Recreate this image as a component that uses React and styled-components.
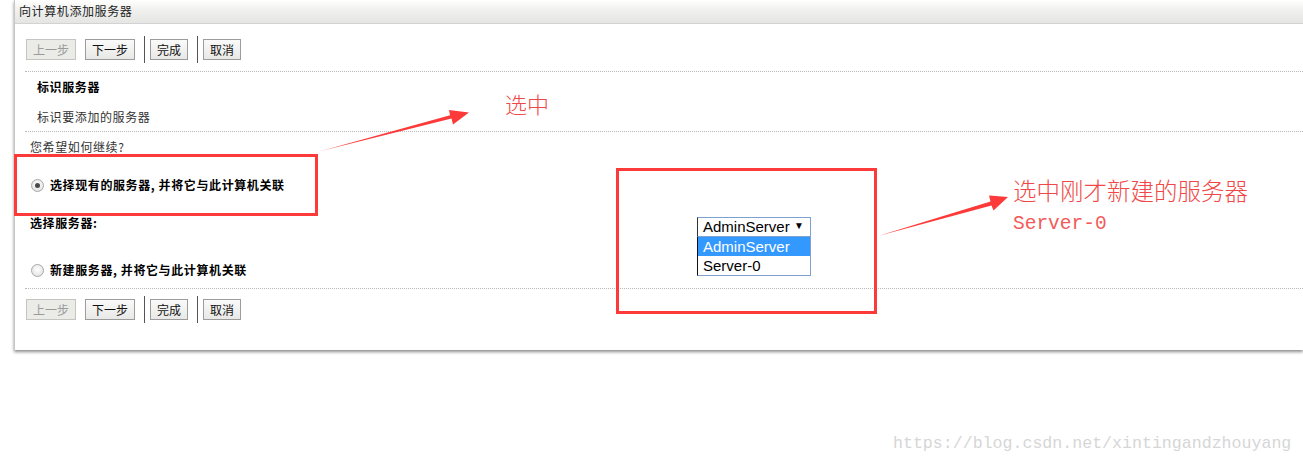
import React from 'react';
import styled, { createGlobalStyle } from 'styled-components';

const GlobalStyle = createGlobalStyle`
  html, body {
    margin: 0;
    padding: 0;
    background: #fff;
  }
  body {
    font-family: "Liberation Sans", "Noto Sans CJK SC", sans-serif;
  }
`;

const Page = styled.div`
  position: relative;
  width: 1303px;
  height: 465px;
  overflow: hidden;
  background: #fff;
`;

const Panel = styled.div`
  margin-left: 14px;
  height: 350px;
  box-sizing: border-box;
  border-left: 1px solid #c6c6c6;
  background: #fff;
  box-shadow: 0 2px 3px rgba(0, 0, 0, 0.45);
  font-family: "Noto Sans CJK SC", sans-serif;
  font-size: 12px;
  letter-spacing: 0.6px;
  color: #222;
`;

const Header = styled.div`
  height: 23px;
  line-height: 22px;
  padding-left: 4px;
  font-size: 12px;
  letter-spacing: 0.6px;
  color: #222;
  background: linear-gradient(180deg, #ffffff 0%, #f1f1f0 40%, #e5e6e4 100%);
  border-bottom: 1px solid #d3d3d3;
`;

const Toolbar = styled.div`
  display: flex;
  align-items: center;
  height: 27px;
  letter-spacing: 0;
  padding: ${p => (p.bottom ? '7px 0 27px 1px' : '12px 0 8px 11px')};
`;

const ToolButton = styled.button`
  height: 21px;
  padding: 0 6px;
  margin-right: 9px;
  border: 1px solid ${p => (p.disabled ? '#c4c4c0' : '#9c9c9c')};
  border-radius: 0;
  background: ${p => (p.disabled ? '#ebebe8' : 'linear-gradient(180deg, #fafafa 0%, #e8e8e6 100%)')};
  color: ${p => (p.disabled ? '#9a9a9a' : '#111')};
  font-family: "Noto Sans CJK SC", sans-serif;
  font-size: 12px;
  line-height: 19px;
  cursor: default;
`;

const Separator = styled.span`
  width: 1px;
  height: 27px;
  margin-right: 5px;
  background: #555;
`;

const Section = styled.div`
  margin-left: 10px;
  border-top: 1px dotted #b8b8b8;
  padding: ${p => p.pad};
`;

const Line = styled.div`
  height: 20px;
  line-height: 20px;
  margin-top: ${p => p.gap || 0}px;
  font-weight: ${p => (p.bold ? 700 : 400)};
  color: ${p => (p.bold ? '#000' : '#333')};
  display: flex;
  align-items: center;
`;

const Radio = styled.span`
  box-sizing: border-box;
  width: 13px;
  height: 13px;
  margin: 0 6px 0 1px;
  border-radius: 50%;
  border: 1px solid #a8a8a8;
  background: radial-gradient(circle at 50% 40%, #ffffff 0%, #e6e6e6 70%, #d0d0d0 100%);
  display: flex;
  align-items: center;
  justify-content: center;

  &::after {
    content: '';
    width: 5px;
    height: 5px;
    border-radius: 50%;
    background: ${p => (p.checked ? '#4a4a4a' : 'transparent')};
  }
`;

const Overlay = styled.svg`
  position: absolute;
  left: 0;
  top: 0;
  pointer-events: none;
`;

const RedBox = styled.div`
  position: absolute;
  box-sizing: border-box;
  border: 3px solid #fd3a3a;
  left: ${p => p.x}px;
  top: ${p => p.y}px;
  width: ${p => p.w}px;
  height: ${p => p.h}px;
`;

const SelectArea = styled.div`
  display: flex;
  flex-direction: column;
  width: 114px;
  margin: 46px 0 0 78px;
  font-family: "Liberation Sans", Arial, sans-serif;
  font-size: 15px;
  color: #000;
`;

const SelectBox = styled.div`
  box-sizing: border-box;
  height: 20px;
  border: 1px solid #7fa1cf;
  border-left-color: #333;
  display: flex;
  align-items: center;
  justify-content: space-between;
  padding: 0 6px 0 5px;
  line-height: 18px;
  background: #fff;
`;

const Caret = styled.span`
  font-size: 10px;
  margin-top: -2px;
`;

const OptionList = styled.div`
  box-sizing: border-box;
  border: 1px solid #7fa1cf;
  border-left-color: #111;
  border-top: none;
  background: #fff;
`;

const Option = styled.div`
  height: 19px;
  line-height: 19px;
  padding-left: 5px;
  background: ${p => (p.active ? '#3399ff' : '#fff')};
  color: ${p => (p.active ? '#fff' : '#000')};
`;

const Note = styled.div`
  position: absolute;
  left: ${p => p.x}px;
  top: ${p => p.y}px;
  color: #f04848;
  font-family: "Noto Sans CJK SC", sans-serif;
  font-size: ${p => p.size || 22}px;
  line-height: 1.3;
  font-weight: 300;
`;

const Mono = styled.div`
  margin-top: 7px;
  font-family: "Liberation Mono", monospace;
  font-size: 19.5px;
  line-height: 22px;
  font-weight: 400;
  color: #f25a5a;
`;

const Watermark = styled.div`
  position: absolute;
  left: 893px;
  top: 434px;
  font-family: "Liberation Mono", monospace;
  font-size: 16.6px;
  color: #d6d6d6;
`;

const Buttons = ({ bottom }) => (
  <Toolbar bottom={bottom}>
    <ToolButton disabled>上一步</ToolButton>
    <ToolButton>下一步</ToolButton>
    <Separator />
    <ToolButton>完成</ToolButton>
    <Separator />
    <ToolButton>取消</ToolButton>
  </Toolbar>
);

export default function App() {
  return (
    <Page>
      <GlobalStyle />
      <Panel>
        <Header>向计算机添加服务器</Header>
        <Buttons />
        <Section pad="5px 0 4px 12px">
          <Line bold>标识服务器</Line>
          <Line gap={10}>标识要添加的服务器</Line>
        </Section>
        <Section pad="5px 0 8px 5px">
          <Line>您希望如何继续?</Line>
          <Line bold gap={18}>
            <Radio checked />
            选择现有的服务器, 并将它与此计算机关联
          </Line>
          <Line bold gap={18}>选择服务器:</Line>
          <Line bold gap={27}>
            <Radio />
            新建服务器, 并将它与此计算机关联
          </Line>
        </Section>
        <Section pad="0">
          <Buttons bottom />
        </Section>
      </Panel>

      <RedBox x={14} y={154} w={304} h={62} />
      <RedBox x={616} y={168} w={261} h={146}>
        <SelectArea>
          <SelectBox>
            AdminServer
            <Caret>▼</Caret>
          </SelectBox>
          <OptionList>
            <Option active>AdminServer</Option>
            <Option>Server-0</Option>
          </OptionList>
        </SelectArea>
      </RedBox>

      <Overlay width="1303" height="465" viewBox="0 0 1303 465">
        <polygon
          points="321,151 451.5,118.6 453,124.5 469,112.5 449,110 450,115.2"
          fill="#fd3a3a"
        />
        <polygon
          points="878,236 991.5,205.5 993.5,210.5 1008,197 989,195.5 990.5,201.5"
          fill="#fd3a3a"
        />
      </Overlay>

      <Note x={505} y={89}>选中</Note>
      <Note x={1013} y={175} size={23.5}>
        选中刚才新建的服务器
        <Mono>Server-0</Mono>
      </Note>

      <Watermark>https://blog.csdn.net/xintingandzhouyang</Watermark>
    </Page>
  );
}
